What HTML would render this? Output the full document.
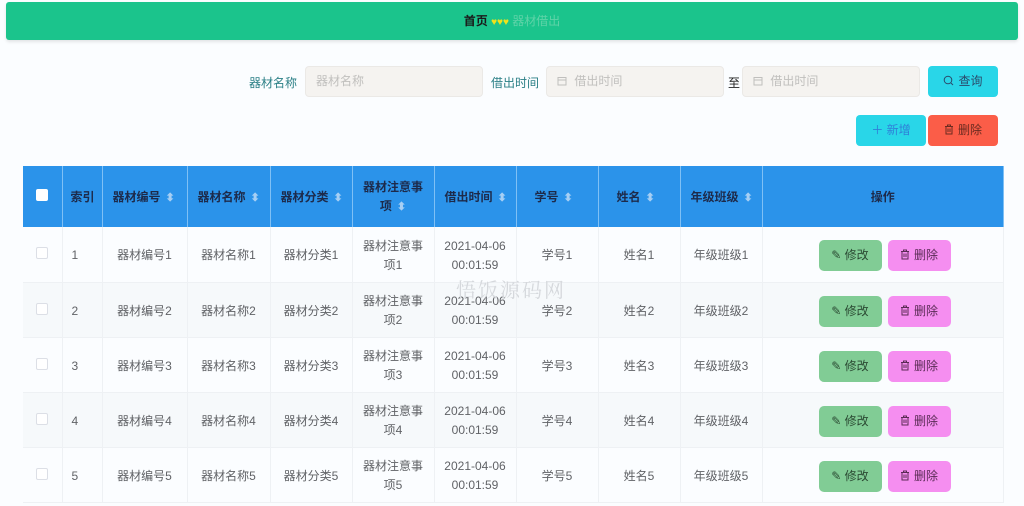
<!DOCTYPE html>
<html><head><meta charset="utf-8"><style>
*{box-sizing:border-box;margin:0;padding:0}
body{width:1024px;height:506px;overflow:hidden;background:#fbfdff;font-family:"Liberation Sans","Noto Sans CJK SC",sans-serif;font-size:12px;color:#606266;position:relative}
.a{position:absolute}
.top{left:6px;top:2px;width:1012px;height:38px;background:#1bc48c;border-radius:3px;box-shadow:0 2px 3px rgba(0,0,0,.1);text-align:center;line-height:38px;font-size:12px}
.lbl{color:#2a7f86;font-size:12px;top:74px}
.inp{top:66px;height:31px;background:#f5f3f0;border:1px solid #ebe9e6;border-radius:4px;color:#c0bfbd;line-height:29px;padding-left:10px;font-size:12px}
.btn{border-radius:4px;text-align:center;line-height:31px;height:31px;font-size:12px}
table{position:absolute;left:23px;top:166px;width:981px;border-collapse:collapse;table-layout:fixed}
th{background:#2b93ea;color:#1d2a4a;font-weight:bold;height:61px;border-right:1px solid #7fc0f5;font-size:12px;text-align:left;padding-left:10px}
td{height:55px;border-right:1px solid #eef1f4;border-bottom:1px solid #eef1f4;text-align:center;font-size:12px;color:#606266;line-height:19px;padding-top:3px}
tr.s td{background:#f6f9fb}
.sort{display:inline-block;color:#a7cff4;font-size:11px;margin-left:5px;line-height:1}
.cb{display:inline-block;width:12px;height:12px;border:1px solid #dcdfe6;border-radius:2px;background:#fff}
.e{display:inline-block;width:63px;height:31px;line-height:31px;border-radius:5px;background:#81cc95;color:#2b4a33;margin:0 3px;text-align:center}
.d{display:inline-block;width:63px;height:31px;line-height:31px;border-radius:5px;background:#f58ef0;color:#5a2b55;margin:0 3px;text-align:center}
svg{vertical-align:-1px;margin-right:4px}
</style></head><body>
<div class="a top"><b style="color:#1a1a1a">首页</b> <span style="color:#f2e21a;font-size:10px">♥♥♥</span> <span style="color:#5fd3a8">器材借出</span></div>
<div class="a lbl" style="left:249px">器材名称</div>
<div class="a inp" style="left:305px;width:178px">器材名称</div>
<div class="a lbl" style="left:491px">借出时间</div>
<div class="a inp" style="left:546px;width:178px"><svg width="10" height="10" viewBox="0 0 10 10"><rect x="1" y="1.5" width="8" height="7.5" fill="none" stroke="#c0bfbd"/><line x1="1" y1="4" x2="9" y2="4" stroke="#c0bfbd"/></svg> 借出时间</div>
<div class="a" style="left:728px;top:74px;color:#222">至</div>
<div class="a inp" style="left:742px;width:178px"><svg width="10" height="10" viewBox="0 0 10 10"><rect x="1" y="1.5" width="8" height="7.5" fill="none" stroke="#c0bfbd"/><line x1="1" y1="4" x2="9" y2="4" stroke="#c0bfbd"/></svg> 借出时间</div>
<div class="a btn" style="left:928px;top:66px;width:70px;background:#29d6e8;color:#2b4a6b"><svg width="11" height="11" viewBox="0 0 11 11"><circle cx="5" cy="5" r="3.8" fill="none" stroke="#2b4a6b"/><line x1="8" y1="8" x2="10" y2="10" stroke="#2b4a6b"/></svg>查询</div>
<div class="a btn" style="left:856px;top:115px;width:70px;background:#29d6e8;color:#2f7fd8">＋ 新增</div>
<div class="a btn" style="left:928px;top:115px;width:70px;background:#fb5d48;color:#6b2b20"><svg width="10" height="11" viewBox="0 0 10 11"><path d="M1 2.5H9M3.5 2.5V1H6.5V2.5M2 2.5V10H8V2.5M4 4.5V8M6 4.5V8" fill="none" stroke="#6b2b20"/></svg>删除</div>
<div class="a" style="left:456px;top:274px;font-size:20px;color:#d5d8dc;font-family:'Noto Serif CJK SC',serif;letter-spacing:2px;z-index:2">悟饭源码网</div>
<table>
<colgroup><col style="width:39px"><col style="width:40px"><col style="width:85px"><col style="width:83px"><col style="width:82px"><col style="width:82px"><col style="width:82px"><col style="width:82px"><col style="width:82px"><col style="width:82px"><col></colgroup>
<tr><th style="padding-left:13px"><span class="cb" style="border:none"></span></th><th style="padding-left:8px">索引</th><th>器材编号<span class="sort">⬍</span></th><th>器材名称<span class="sort">⬍</span></th><th>器材分类<span class="sort">⬍</span></th><th style="text-align:center;padding:0;line-height:19px">器材注意事<br>项<span class="sort">⬍</span></th><th>借出时间<span class="sort">⬍</span></th><th style="padding-left:18px">学号<span class="sort">⬍</span></th><th style="padding-left:18px">姓名<span class="sort">⬍</span></th><th>年级班级<span class="sort">⬍</span></th><th style="text-align:center;padding:0">操作</th></tr>
<tr><td><span class="cb"></span></td><td style="text-align:left;padding-left:9px">1</td><td>器材编号1</td><td>器材名称1</td><td>器材分类1</td><td>器材注意事<br>项1</td><td>2021-04-06<br>00:01:59</td><td>学号1</td><td>姓名1</td><td>年级班级1</td><td style="text-align:left;padding-left:53px"><span class="e">✎ 修改</span><span class="d"><svg width="10" height="11" viewBox="0 0 10 11"><path d="M1 2.5H9M3.5 2.5V1H6.5V2.5M2 2.5V10H8V2.5M4 4.5V8M6 4.5V8" fill="none" stroke="#5a2b55"/></svg>删除</span></td></tr>
<tr class="s"><td><span class="cb"></span></td><td style="text-align:left;padding-left:9px">2</td><td>器材编号2</td><td>器材名称2</td><td>器材分类2</td><td>器材注意事<br>项2</td><td>2021-04-06<br>00:01:59</td><td>学号2</td><td>姓名2</td><td>年级班级2</td><td style="text-align:left;padding-left:53px"><span class="e">✎ 修改</span><span class="d"><svg width="10" height="11" viewBox="0 0 10 11"><path d="M1 2.5H9M3.5 2.5V1H6.5V2.5M2 2.5V10H8V2.5M4 4.5V8M6 4.5V8" fill="none" stroke="#5a2b55"/></svg>删除</span></td></tr>
<tr><td><span class="cb"></span></td><td style="text-align:left;padding-left:9px">3</td><td>器材编号3</td><td>器材名称3</td><td>器材分类3</td><td>器材注意事<br>项3</td><td>2021-04-06<br>00:01:59</td><td>学号3</td><td>姓名3</td><td>年级班级3</td><td style="text-align:left;padding-left:53px"><span class="e">✎ 修改</span><span class="d"><svg width="10" height="11" viewBox="0 0 10 11"><path d="M1 2.5H9M3.5 2.5V1H6.5V2.5M2 2.5V10H8V2.5M4 4.5V8M6 4.5V8" fill="none" stroke="#5a2b55"/></svg>删除</span></td></tr>
<tr class="s"><td><span class="cb"></span></td><td style="text-align:left;padding-left:9px">4</td><td>器材编号4</td><td>器材名称4</td><td>器材分类4</td><td>器材注意事<br>项4</td><td>2021-04-06<br>00:01:59</td><td>学号4</td><td>姓名4</td><td>年级班级4</td><td style="text-align:left;padding-left:53px"><span class="e">✎ 修改</span><span class="d"><svg width="10" height="11" viewBox="0 0 10 11"><path d="M1 2.5H9M3.5 2.5V1H6.5V2.5M2 2.5V10H8V2.5M4 4.5V8M6 4.5V8" fill="none" stroke="#5a2b55"/></svg>删除</span></td></tr>
<tr><td><span class="cb"></span></td><td style="text-align:left;padding-left:9px">5</td><td>器材编号5</td><td>器材名称5</td><td>器材分类5</td><td>器材注意事<br>项5</td><td>2021-04-06<br>00:01:59</td><td>学号5</td><td>姓名5</td><td>年级班级5</td><td style="text-align:left;padding-left:53px"><span class="e">✎ 修改</span><span class="d"><svg width="10" height="11" viewBox="0 0 10 11"><path d="M1 2.5H9M3.5 2.5V1H6.5V2.5M2 2.5V10H8V2.5M4 4.5V8M6 4.5V8" fill="none" stroke="#5a2b55"/></svg>删除</span></td></tr>
</table>
</body></html>
